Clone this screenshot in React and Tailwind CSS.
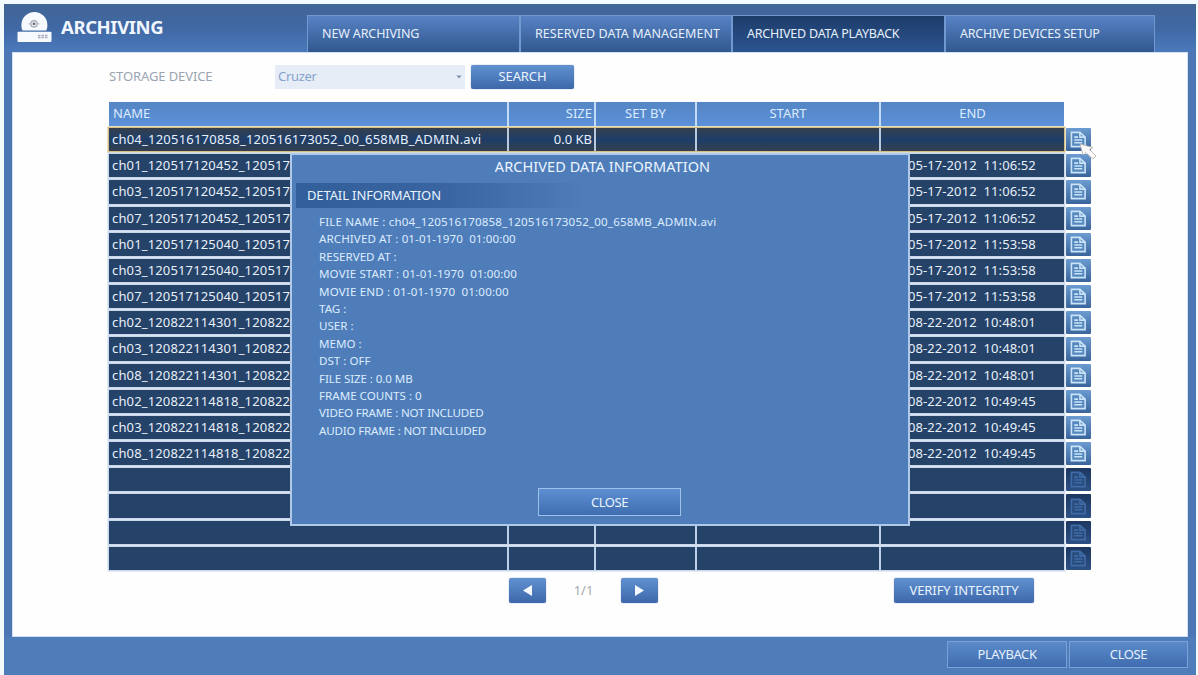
const tabs = [
	{ label: "NEW ARCHIVING", width: "w-[212px]", tracking: "tracking-[-0.12px]" },
	{ label: "RESERVED DATA MANAGEMENT", width: "w-[212px]", tracking: "tracking-[0.05px]" },
	{ label: "ARCHIVED DATA PLAYBACK", width: "w-[213px]", tracking: "tracking-[-0.22px]", active: true },
	{ label: "ARCHIVE DEVICES SETUP", width: "w-[211px]", tracking: "tracking-[-0.26px]" }
]

const files = [
	{ name: "ch04_120516170858_120516173052_00_658MB_ADMIN.avi", size: "0.0 KB", end: "" },
	{ name: "ch01_120517120452_120517", end: "05-17-2012  11:06:52" },
	{ name: "ch03_120517120452_120517", end: "05-17-2012  11:06:52" },
	{ name: "ch07_120517120452_120517", end: "05-17-2012  11:06:52" },
	{ name: "ch01_120517125040_120517", end: "05-17-2012  11:53:58" },
	{ name: "ch03_120517125040_120517", end: "05-17-2012  11:53:58" },
	{ name: "ch07_120517125040_120517", end: "05-17-2012  11:53:58" },
	{ name: "ch02_120822114301_120822", end: "08-22-2012  10:48:01" },
	{ name: "ch03_120822114301_120822", end: "08-22-2012  10:48:01" },
	{ name: "ch08_120822114301_120822", end: "08-22-2012  10:48:01" },
	{ name: "ch02_120822114818_120822", end: "08-22-2012  10:49:45" },
	{ name: "ch03_120822114818_120822", end: "08-22-2012  10:49:45" },
	{ name: "ch08_120822114818_120822", end: "08-22-2012  10:49:45" },
	{}, {}, {}, {}
]

const details = [
	{ text: "FILE NAME : ch04_120516170858_120516173052_00_658MB_ADMIN.avi", tracking: "tracking-[0.16px]" },
	{ text: "ARCHIVED AT : 01-01-1970  01:00:00", tracking: "tracking-[0.08px]" },
	{ text: "RESERVED AT :" },
	{ text: "MOVIE START : 01-01-1970  01:00:00", tracking: "tracking-[0.1px]" },
	{ text: "MOVIE END : 01-01-1970  01:00:00", tracking: "tracking-[0.14px]" },
	{ text: "TAG :" },
	{ text: "USER :" },
	{ text: "MEMO :" },
	{ text: "DST : OFF" },
	{ text: "FILE SIZE : 0.0 MB", tracking: "tracking-[-0.1px]" },
	{ text: "FRAME COUNTS : 0" },
	{ text: "VIDEO FRAME : NOT INCLUDED", tracking: "tracking-[-0.19px]" },
	{ text: "AUDIO FRAME : NOT INCLUDED", tracking: "tracking-[-0.19px]" }
]

const columns = "grid grid-cols-[398px_85px_99px_182px_183px] gap-x-[2px]"

const DiscIcon = () => (
	<svg width="36" height="32" viewBox="0 0 36 32" className="shrink-0">
		<path d="M5.500 19.500C4.800 18 4.400 16 4.400 14a13 13 0 0 1 26 0c0 2-.4 4-1.100 5.500z" fill="#f6fafe" />
		<path d="M1.500 20.800h32a1 1 0 0 1 1 1V30a1 1 0 0 1-1 1h-32a1 1 0 0 1-1-1v-8.200a1 1 0 0 1 1-1z" fill="#f6fafe" />
		<circle cx="17" cy="12.800" r="3.200" fill="none" stroke="#a3a9b3" strokeWidth="1.300" />
		<circle cx="17" cy="12.800" r="1.500" fill="#6c7480" />
		<path d="M11.500 12.800h2M20.500 12.800h2" stroke="#b4bac4" />
		<path d="M21 24.500h2.500m1 0H27m1 0h2.500M21 26.500h2.500m1 0H27m1 0h2.500" stroke="#a6b0be" strokeWidth="1.300" />
	</svg>
)

const DocIcon = ({ disabled }) => (
	<svg width="17" height="17" viewBox="0 0 18 18" fill="none" stroke={disabled ? "#3f6ba6" : "#c9e3f8"} strokeWidth="1.700">
		<path d="M1.500 1.500h9l5.500 5v10H1.500z" fill={disabled ? "#2a4c7d" : "#5687bd"} />
		<path d="M10.500 1.500v5H16" />
		<path d="M4.500 6.500h4M4.500 9.500h8.500M4.500 12.500h8.500" />
	</svg>
)

const Cursor = () => (
	<svg width="19" height="17" viewBox="0 0 19 17" className="absolute left-[13px] top-[15px] z-10">
		<path d="M1 1l3 11 3-2.500 5.500 5.500 2 .5 2.500-2.500-6.500-6.500 3.500-2z" fill="#fbfaf8" stroke="#b4afac" strokeWidth=".8" />
	</svg>
)

const Button = ({ children, className }) => (
	<button className={`flex items-center justify-center rounded-[2px] bg-linear-to-b from-[#6191cf] to-[#3d68ab] text-[#eaf4ff] shadow-[0_0_1px_#345e9c] ${className}`}>
		{children}
	</button>
)

const Header = () => (
	<header className="flex h-[48px] justify-between bg-linear-to-b from-[#416596] via-[#4068a4] to-[#4a79bb] pr-[41px]">
		<div className="flex items-start gap-[8px] pl-[13px] pt-[7px]">
			<DiscIcon />
			<h1 className="pt-[3px] text-[18.5px] leading-[26px] font-bold tracking-[-0.4px] text-[#f0f7ff]">ARCHIVING</h1>
		</div>
		<nav className="mt-[11px] flex">
			{tabs.map(({ label, width, tracking, active }) => (
				<button
					key={label}
					className={`${width} ${tracking} border-l-2 border-t border-[#7198cf] pl-[14px] text-left text-[12.5px] whitespace-nowrap text-[#e6f0fc] first:border-l last:border-r ${active ? "bg-linear-to-b from-[#1d3c6a] to-[#2c5590]" : "bg-linear-to-b from-[#5782c4] to-[#31588f]"}`}
				>
					{label}
				</button>
			))}
		</nav>
	</header>
)

const SearchBar = () => (
	<div className="flex h-[25px] items-center text-[13px]">
		<span className="w-[166px] tracking-[-0.1px] text-[#9ba5b1]">STORAGE DEVICE</span>
		<div className="flex h-[24px] w-[190px] items-center justify-between bg-[#e6edf7] pl-[3px] pr-[3px] text-[#84a3cc]">
			<span className="text-[13px] tracking-[-0.3px]">Cruzer</span>
			<svg width="6" height="4" viewBox="0 0 7 5"><path d="M0 .5h7l-3.500 4z" fill="#8295ae" /></svg>
		</div>
		<Button className="ml-[6px] h-[24px] w-[103px] text-[13px] tracking-[-0.1px]">SEARCH</Button>
	</div>
)

const FileTable = () => (
	<div className="mt-[13px]">
		<div className={`${columns} h-[24px] w-[955px] bg-[#c3dbf7] text-[13px] leading-[23px] text-[#dcebff] *:bg-linear-to-b *:from-[#5585c4] *:to-[#5b91d9]`}>
			<div className="pl-[4px]">NAME</div>
			<div className="pr-[2px] text-right">SIZE</div>
			<div className="text-center">SET BY</div>
			<div className="text-center">START</div>
			<div className="text-center">END</div>
		</div>
		<div className="mt-[2px] grid h-[442px] auto-rows-fr gap-y-[3px]">
			{files.map(({ name, size, end }, index) => (
				<div key={index} className="flex gap-[2px]">
					<div
						className={`${columns} w-[955px] text-[13px] leading-[23px] whitespace-pre text-[#e8f0fa] ${index == 0 ? "bg-[#b9c8da] shadow-[0_0_0_1.5px_#d4bf86] *:bg-linear-to-b *:from-[#343f4c] *:via-[#1d3d69] *:to-[#343f4c]" : "bg-[#bccfe8] shadow-[0_0_0_1.5px_#c9d8eb] *:bg-[#254268]"}`}
					>
						<div className={`pl-[3px] ${index == 0 ? "tracking-[0.22px]" : "tracking-[0.15px]"}`}>{name}</div>
						<div className="pr-[2px] text-right">{size}</div>
						<div />
						<div />
						<div className="pl-[27px] tracking-[0.08px]">{end}</div>
					</div>
					<div
						className={`relative flex w-[25px] items-center justify-center rounded-[1px] ${name ? "bg-linear-to-b from-[#6b9bd0] to-[#3a659c]" : "bg-linear-to-b from-[#1c3760] to-[#2d5085]"}`}
					>
						<DocIcon disabled={!name} />
						{index == 0 ? <Cursor /> : null}
					</div>
				</div>
			))}
		</div>
	</div>
)

const Pager = () => (
	<div className="mt-[8px] flex h-[25px] items-center pl-[400px]">
		<Button className="h-[25px] w-[37px]">
			<svg width="9" height="11" viewBox="0 0 9 11"><path d="M9 0v11L0 5.500z" fill="#f4f9ff" /></svg>
		</Button>
		<span className="w-[75px] text-center text-[13px] text-[#a9a9a9]">1/1</span>
		<Button className="h-[25px] w-[37px]">
			<svg width="9" height="11" viewBox="0 0 9 11"><path d="M0 0v11l9-5.500z" fill="#f4f9ff" /></svg>
		</Button>
		<Button className="ml-[236px] h-[25px] w-[140px] text-[13px] tracking-[-0.08px]">VERIFY INTEGRITY</Button>
	</div>
)

const DetailDialog = () => (
	<div className="absolute left-[290px] top-[153px] z-20 flex h-[373px] w-[620px] flex-col border-2 border-[#b0c9e8] bg-[#4f7db9]">
		<h2 className="pl-[5px] text-center text-[14.5px] leading-[22px] tracking-[0.08px] text-[#ecf5ff]">ARCHIVED DATA INFORMATION</h2>
		<h3 className="ml-[4px] mt-[6px] h-[25px] w-[290px] bg-linear-to-r from-[#325e99] via-[#3865a1] to-[#4f7db9] pl-[11px] text-[13px] leading-[24px] tracking-[-0.12px] text-[#e8f3ff]">DETAIL INFORMATION</h3>
		<div className="mt-[5px] pl-[27px] text-[11.6px] leading-[17.4px] whitespace-pre text-[#dcecff]">
			{details.map(({ text, tracking = "" }) => <p key={text} className={tracking}>{text}</p>)}
		</div>
		<button className="ml-[246px] mt-[49px] h-[28px] w-[143px] shrink-0 border border-[#9fc0ea] bg-linear-to-b from-[#5d8fd2] to-[#3f6eb0] text-[13px] tracking-[-0.5px] text-[#eaf4ff]">
			CLOSE
		</button>
	</div>
)

const Footer = () => (
	<footer className="flex h-[38px] justify-end gap-[2px] bg-[#4f7dba] pr-[8px] pt-[4px] text-[13px] tracking-[-0.4px] text-[#e6f1ff]">
		<button className="h-[27px] w-[120px] border border-[#7ba2d8] bg-linear-to-b from-[#5b8ac9] to-[#3f6cae]">PLAYBACK</button>
		<button className="h-[27px] w-[119px] border border-[#7ba2d8] bg-linear-to-b from-[#5b8ac9] to-[#3f6cae]">CLOSE</button>
	</footer>
)

const App = () => (
	<div className="relative h-[675px] w-[1198px] overflow-hidden bg-[#f4fbff] pl-[4px] pr-[2px] pt-[4px] font-['Noto_Sans',sans-serif]">
		<div className="flex h-[671px] flex-col bg-[#4c76b4]">
			<Header />
			<main className="mx-[8px] h-[585px] border border-[#cfe0f3] bg-[#fefefe] pl-[96px] pt-[11px]">
				<SearchBar />
				<FileTable />
				<Pager />
			</main>
			<Footer />
		</div>
		<DetailDialog />
	</div>
)

export default App
